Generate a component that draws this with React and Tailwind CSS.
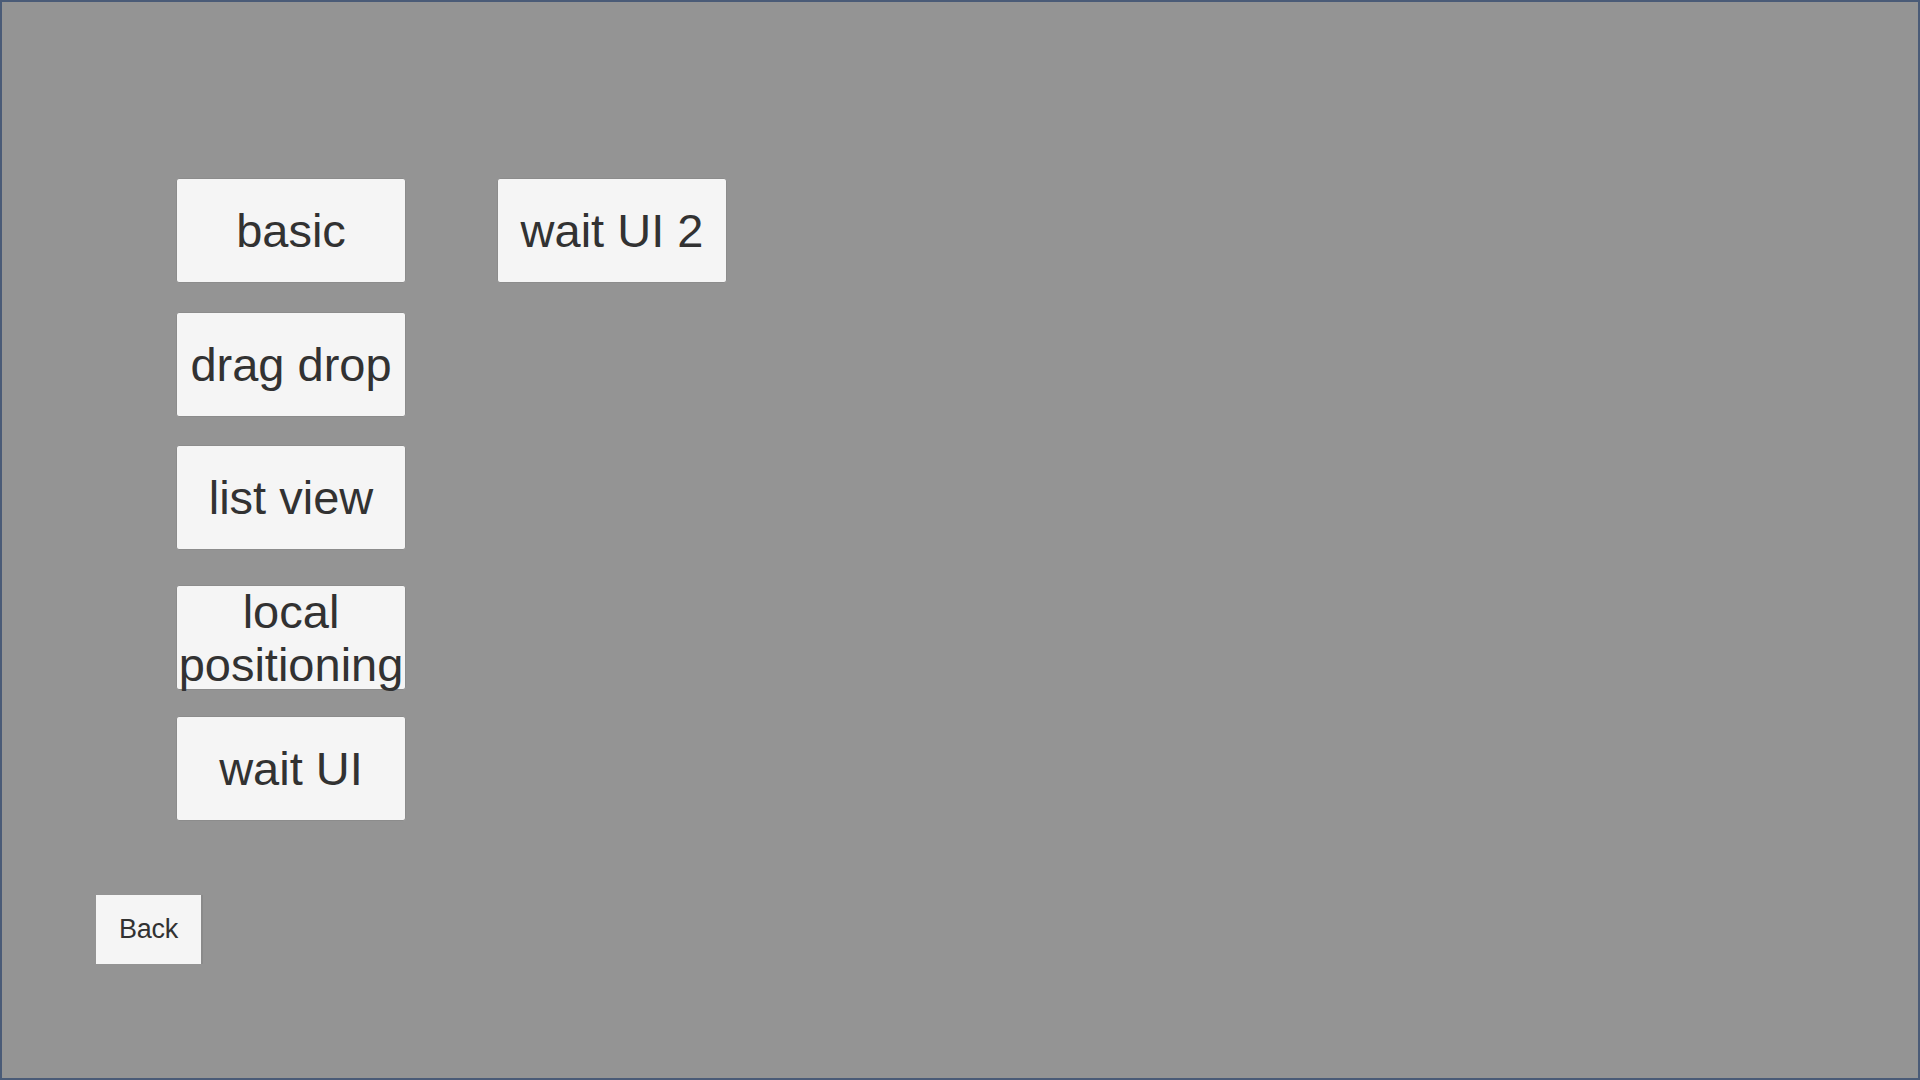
import React from "react";

const MenuButton = ({ label, className = "" }) => (
  <button
    type="button"
    className={`flex items-center justify-center w-[230px] h-[105px] shrink-0 bg-[#f5f5f5] border border-[#8c8c8c] rounded-[3px] text-[#323232] text-[47px] leading-[53px] text-center ${className}`}
  >
    {label}
  </button>
);

const App = () => {
  return (
    <div
      className="w-screen h-screen overflow-hidden bg-[#949494] border-2 border-[#4a5b77]"
      style={{ fontFamily: '"Liberation Sans", Arial, sans-serif' }}
    >
      <div className="flex flex-col pl-[94px] pt-[176px]">
        <div className="flex gap-[91px] ml-[80px]">
          <div className="flex flex-col">
            <MenuButton label="basic" />
            <MenuButton label="drag drop" className="mt-[29px]" />
            <MenuButton label="list view" className="mt-[28px]" />
            <MenuButton label="local positioning" className="mt-[35px]" />
            <MenuButton label="wait UI" className="mt-[26px]" />
          </div>
          <div className="flex flex-col">
            <MenuButton label="wait UI 2" />
          </div>
        </div>
        <button
          type="button"
          className="mt-[74px] flex items-center justify-center w-[105px] h-[69px] bg-[#f5f5f5] text-[#323232] text-[27px] tracking-[-0.3px] shadow-[2px_0_0_#8a8a8a]"
        >
          Back
        </button>
      </div>
    </div>
  );
};

export default App;
